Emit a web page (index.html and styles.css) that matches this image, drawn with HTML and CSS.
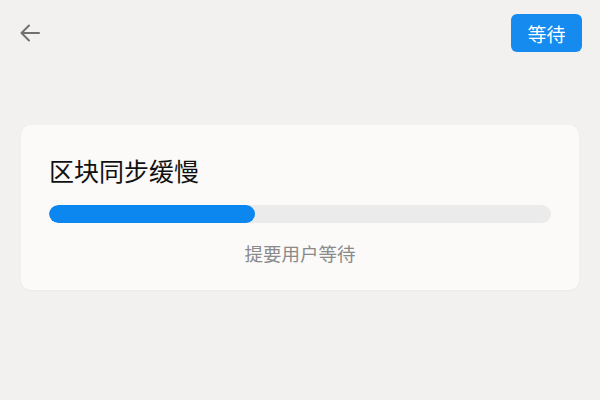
FILE: index.html
```html
<!DOCTYPE html>
<html lang="zh">
<head>
<meta charset="utf-8">
<link rel="stylesheet" href="styles.css">
</head>
<body>
<header class="top">
  <button class="back" aria-label="返回">
    <svg width="22" height="22" viewBox="0 0 22 22"><path d="M20 11H3M10 3.5L2.5 11L10 18.5" fill="none" stroke="#707070" stroke-width="2" stroke-linecap="round" stroke-linejoin="round"/></svg>
  </button>
  <button class="wait">等待</button>
</header>
<main class="card">
  <h1 class="title">区块同步缓慢</h1>
  <div class="track"><div class="fill" style="width:41%"></div></div>
  <p class="hint">提要用户等待</p>
</main>
</body>
</html>
```
FILE: styles.css
```css
html, body { margin: 0; padding: 0; }
body {
  width: 600px; height: 400px;
  background: #f2f1f0;
  font-family: "Noto Sans CJK SC", "Noto Sans", sans-serif;
  overflow: hidden;
}
.top {
  display: flex; justify-content: space-between; align-items: center;
  padding: 14px 18px 0 19px;
  height: 38px;
}
.back {
  border: 0; background: none; padding: 0; width: 22px; height: 22px;
  display: flex; align-items: center; justify-content: center;
}
.wait {
  width: 71px; height: 38px;
  border: 0; border-radius: 6px;
  background: #158bef; color: #fff;
  font-family: inherit; font-size: 19px; line-height: 1;
  padding: 0;
}
.card {
  margin: 73px 21px 0 21px;
  background: #fbfaf9;
  border-radius: 10px;
  padding: 28px 28px 25px 28px;
  box-shadow: 0 1px 3px rgba(0,0,0,0.03);
}
.title {
  margin: 0; font-size: 25px; line-height: 34px; font-weight: 400; color: #111;
}
.track {
  margin-top: 18px; height: 18px; border-radius: 9px; background: #ebebeb; overflow: hidden;
}
.fill { height: 100%; background: #0d87f0; border-radius: 9px; }
.hint {
  margin: 18px 0 0; text-align: center; font-size: 18.5px; line-height: 24px; color: #8a8a8a;
}
```
